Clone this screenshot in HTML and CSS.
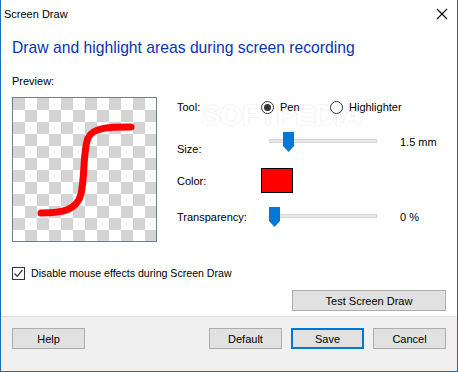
FILE: index.html
```html
<!DOCTYPE html>
<html lang="en">
<head>
    <meta charset="UTF-8">
    <title>Screen Draw</title>
    <link rel="stylesheet" href="styles.css">
</head>
<body>

<div class="window">
    <div class="watermark">SOFTPEDIA</div>

    <div class="titlebar">
        <span class="title">Screen Draw</span>
        <svg class="close" width="12" height="12" viewBox="0 0 12 12">
            <path d="M1 1 L11 11 M11 1 L1 11" stroke="#000" stroke-width="1.1" fill="none"/>
        </svg>
    </div>

    <div class="content">
        <h1 class="heading">Draw and highlight areas during screen recording</h1>
        <div class="preview-label">Preview:</div>

        <div class="main">
            <div class="preview">
                <svg width="143" height="143" viewBox="0 0 143 143">
                    <path d="M28 115 C50 115 64 112 68 96 C72 78 70 52 75 40 C80 29 97 29 118 29"
                          stroke="#ff0000" stroke-width="7" stroke-linecap="round" fill="none"/>
                </svg>
            </div>

            <div class="settings">
                <div class="row row-tool">
                    <span class="row-label">Tool:</span>
                    <span class="radio radio-pen"><span class="dot checked"></span>Pen</span>
                    <span class="radio"><span class="dot"></span>Highlighter</span>
                </div>
                <div class="row row-size">
                    <span class="row-label low">Size:</span>
                    <div class="slider">
                        <div class="track"></div>
                        <svg class="thumb" style="left: 14px;" width="11" height="20" viewBox="0 0 11 20">
                            <path d="M0 0 H11 V14 L5.5 20 L0 14 Z" fill="#0078d7"/>
                        </svg>
                    </div>
                    <span class="value">1.5 mm</span>
                </div>
                <div class="row row-color">
                    <span class="row-label">Color:</span>
                    <span class="swatch"></span>
                </div>
                <div class="row row-transp">
                    <span class="row-label">Transparency:</span>
                    <div class="slider">
                        <div class="track"></div>
                        <svg class="thumb" style="left: 0px;" width="11" height="20" viewBox="0 0 11 20">
                            <path d="M0 0 H11 V14 L5.5 20 L0 14 Z" fill="#0078d7"/>
                        </svg>
                    </div>
                    <span class="value">0 %</span>
                </div>
            </div>
        </div>

        <div class="check">
            <span class="box">
                <svg width="11" height="11" viewBox="0 0 11 11">
                    <path d="M1.5 5.5 L4.2 8.3 L9.5 2" stroke="#333" stroke-width="1.2" fill="none"/>
                </svg>
            </span>
            Disable mouse effects during Screen Draw
        </div>

        <div class="test-row">
            <button class="btn btn-wide">Test Screen Draw</button>
        </div>
    </div>

    <div class="footer">
        <button class="btn">Help</button>
        <span class="spacer"></span>
        <button class="btn">Default</button>
        <button class="btn btn-default">Save</button>
        <button class="btn">Cancel</button>
    </div>
</div>

</body>
</html>
```

FILE: styles.css
```css
body {
    margin: 0;
    font-family: "Liberation Sans", Arial, sans-serif;
    font-size: 11px;
    color: #000;
}

.window {
    position: relative;
    width: 458px;
    height: 372px;
    box-sizing: border-box;
    border: 1px solid #1b6db4;
    border-top: none;
    background-color: #fff;
    display: flex;
    flex-direction: column;
    overflow: hidden;
}

.titlebar {
    height: 27px;
    flex: none;
    display: flex;
    align-items: center;
    justify-content: space-between;
    padding: 0 9px 0 3px;
}

.title {
    font-size: 11px;
}

.close {
    margin-top: 1px;
}

.content {
    position: relative;
    z-index: 1;
    flex: 1;
    padding: 0 11px;
}

.heading {
    margin: 11px 0 0;
    font-size: 15.7px;
    font-weight: normal;
    line-height: 20px;
    color: #0a35b0;
}

.preview-label {
    margin-top: 16px;
    line-height: 15px;
}

.main {
    display: flex;
    margin-top: 8px;
}

.preview {
    width: 143px;
    height: 143px;
    border: 1px solid #6f7f91;
    background-color: #fff;
    background-image: conic-gradient(#fff 25%, #d4d4d4 0 50%, #fff 0 75%, #d4d4d4 0);
    background-size: 24px 24px;
}

.preview svg {
    display: block;
}

.settings {
    margin-left: 20px;
    display: flex;
    flex-direction: column;
}

.row {
    display: flex;
    align-items: center;
}

.row-tool { height: 20px; }
.row-size { height: 50px; }
.row-color { height: 27px; }
.row-transp { height: 45px; }

.row-label {
    width: 84px;
}

.row-label.low {
    margin-top: 14px;
}

.radio {
    display: flex;
    align-items: center;
    gap: 6px;
}

.radio-pen {
    width: 69px;
}

.dot {
    width: 11px;
    height: 11px;
    border: 1px solid #333;
    border-radius: 50%;
    background-color: #fff;
    display: inline-flex;
    align-items: center;
    justify-content: center;
}

.dot.checked::after {
    content: "";
    width: 7px;
    height: 7px;
    border-radius: 50%;
    background-color: #333;
}

.slider {
    position: relative;
    width: 108px;
    height: 20px;
    margin-left: 8px;
}

.track {
    margin-top: 7px;
    height: 2px;
    background-color: #e7e7e7;
    border: 1px solid #d6d6d6;
}

.thumb {
    position: absolute;
    top: 0;
}

.value {
    margin-left: 23px;
}

.swatch {
    width: 30px;
    height: 23px;
    border: 1px solid #000;
    background-color: #ff0000;
}

.check {
    display: flex;
    align-items: center;
    margin-top: 24px;
    line-height: 15px;
    font-size: 10.6px;
}

.box {
    width: 11px;
    height: 11px;
    border: 1px solid #333;
    margin-right: 6px;
    display: inline-flex;
}

.test-row {
    display: flex;
    justify-content: flex-end;
    margin-top: 9px;
}

.btn {
    width: 73px;
    height: 21px;
    box-sizing: border-box;
    border: 1px solid #adadad;
    background-color: #e1e1e1;
    font-family: "Liberation Sans", Arial, sans-serif;
    font-size: 11px;
    color: #000;
    padding: 0;
}

.btn-wide {
    width: 154px;
}

.btn-default {
    border: 2px solid #0078d7;
}

.footer {
    flex: none;
    height: 43px;
    border-top: 1px solid #dfdfdf;
    background-color: #f0f0f0;
    display: flex;
    align-items: flex-start;
    gap: 9px;
    padding: 11px 11px 0;
    box-sizing: content-box;
}

.spacer {
    flex: 1;
}

.watermark {
    position: absolute;
    z-index: 0;
    left: 200px;
    top: 99px;
    font-size: 29px;
    font-weight: bold;
    letter-spacing: -0.5px;
    color: #fff;
    text-shadow: 0 0 2px rgba(0, 0, 0, 0.14);
    pointer-events: none;
}
```
